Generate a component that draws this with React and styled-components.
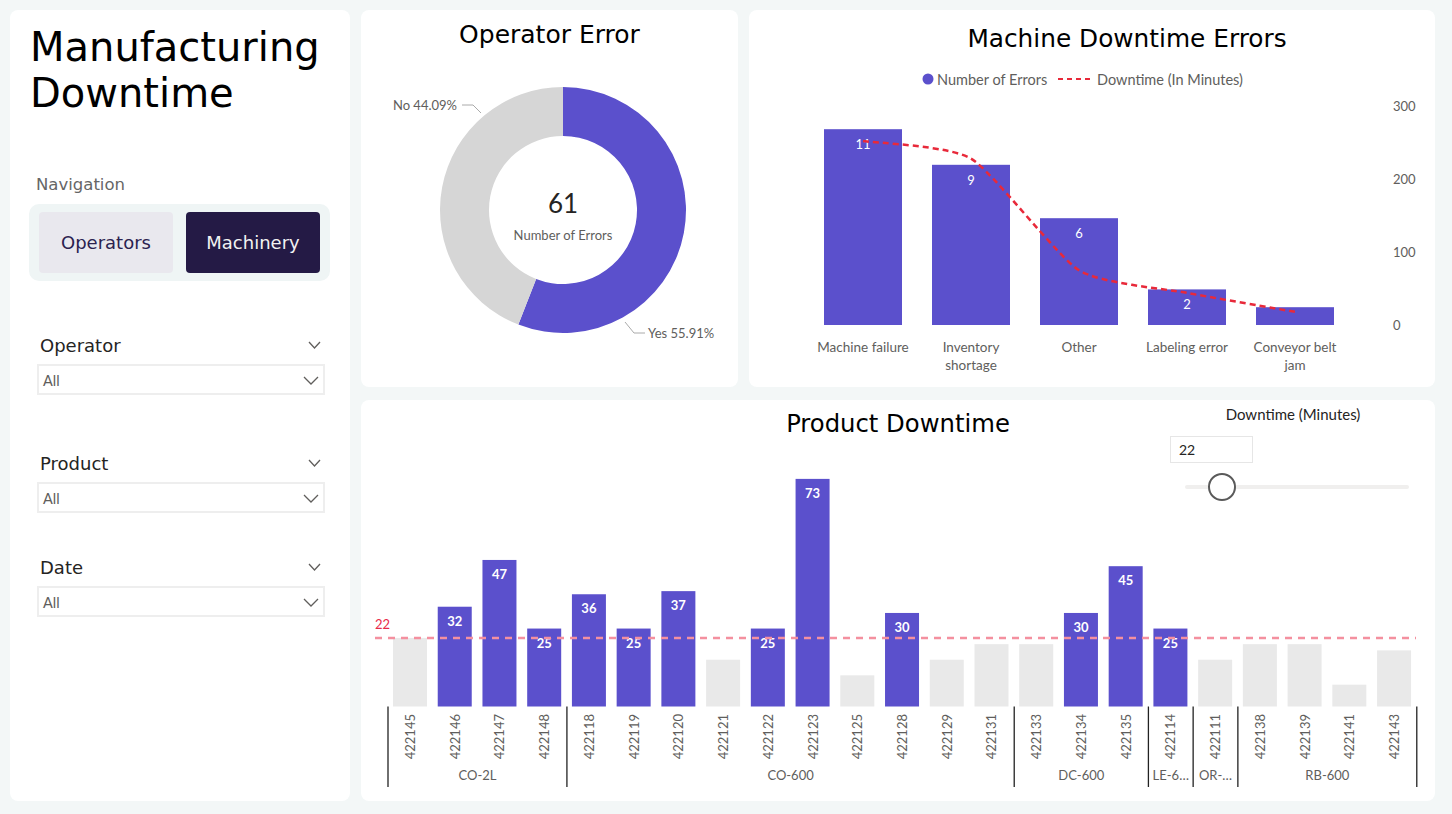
import styled, { createGlobalStyle } from "styled-components";

const GlobalStyle = createGlobalStyle`
  html, body {
    margin: 0;
    padding: 0;
    background: #f3f7f7;
  }
  body {
    font-family: "DejaVu Sans", sans-serif;
  }
`;

const PURPLE = "#5b50cc";
const GREY_BAR = "#e9e9e9";
const LABEL = "#605e5c";

const Page = styled.div`
  width: 1452px;
  height: 814px;
  box-sizing: border-box;
  padding: 10px 17px 14px 10px;
  display: grid;
  grid-template-columns: 340px 1fr;
  gap: 11px;
`;

const Card = styled.div`
  background: #fff;
  border-radius: 8px;
  position: relative;
  overflow: hidden;
`;

const Sidebar = styled(Card)`
  padding: 14px 0 0 20px;
  box-sizing: border-box;
`;

const MainTitle = styled.h1`
  margin: 0;
  font-weight: 400;
  font-size: 40px;
  line-height: 46px;
  color: #000;
`;

const NavLabel = styled.div`
  margin: 59px 0 0 6px;
  font-size: 16.5px;
  line-height: 20px;
  color: #666;
`;

const NavBox = styled.div`
  margin: 9px 0 0 -1px;
  width: 301px;
  box-sizing: border-box;
  padding: 8px 10px;
  background: #eff5f5;
  border-radius: 10px;
  display: flex;
  gap: 13px;
`;

const NavButton = styled.div`
  width: 134px;
  height: 61px;
  border-radius: 4px;
  display: flex;
  align-items: center;
  justify-content: center;
  font-size: 18px;
  background: ${(p) => (p.$active ? "#241a45" : "#e9e8ee")};
  color: ${(p) => (p.$active ? "#f2f2f2" : "#2b2250")};
`;

const Filter = styled.div`
  margin: ${(p) => p.$top}px 0 0 7px;
  width: 288px;
`;

const FilterHead = styled.div`
  height: 22px;
  padding: 0 4px 0 3px;
  display: flex;
  align-items: center;
  justify-content: space-between;
  font-size: 18px;
  color: #252423;
`;

const FilterBox = styled.div`
  margin-top: 8px;
  height: 31px;
  box-sizing: border-box;
  border: 2px solid #eeeeee;
  padding: 2px 4px 0 4px;
  display: flex;
  align-items: center;
  justify-content: space-between;
  font-family: Lato, sans-serif;
  font-size: 14.5px;
  color: ${LABEL};
`;

const Chevron = ({ w, h }) => (
  <svg width={w} height={h} viewBox={`0 0 ${w} ${h}`}>
    <polyline
      points={`1,1 ${w / 2},${h - 1} ${w - 1},1`}
      fill="none"
      stroke="#605e5c"
      strokeWidth="1.3"
    />
  </svg>
);

const Right = styled.div`
  display: grid;
  grid-template-rows: 377px 1fr;
  gap: 13px;
`;

const TopRow = styled.div`
  display: grid;
  grid-template-columns: 377px 1fr;
  gap: 11px;
`;

const ChartTitle = styled.h2`
  margin: 0;
  padding: ${(p) => p.$top}px 0 0 ${(p) => p.$shift || 0}px;
  height: ${(p) => 40 - p.$top}px;
  font-weight: 400;
  font-size: ${(p) => p.$size}px;
  line-height: 30px;
  text-align: center;
  color: #000;
`;

const Chart = styled.svg`
  display: block;
  font-family: Lato, sans-serif;
`;

/* ---------- donut ---------- */

const arc = (cx, cy, R, r, a0, a1) => {
  const pt = (rad, a) => [cx + rad * Math.sin(a), cy - rad * Math.cos(a)];
  const large = a1 - a0 > Math.PI ? 1 : 0;
  const [x0, y0] = pt(R, a0);
  const [x1, y1] = pt(R, a1);
  const [x2, y2] = pt(r, a1);
  const [x3, y3] = pt(r, a0);
  return `M${x0} ${y0} A${R} ${R} 0 ${large} 1 ${x1} ${y1} L${x2} ${y2} A${r} ${r} 0 ${large} 0 ${x3} ${y3} Z`;
};

const OperatorError = () => {
  const split = 0.5591 * Math.PI * 2;
  return (
    <Card>
      <ChartTitle $top={10} $size={25}>
        Operator Error
      </ChartTitle>
      <Chart width="377" height="337">
        <path d={arc(202, 160, 123, 74, 0, split)} fill={PURPLE} />
        <path d={arc(202, 160, 123, 74, split, Math.PI * 2)} fill="#d6d6d6" />
        <text x="202" y="153" fontSize="26" fill="#252423" textAnchor="middle" dominantBaseline="central">
          61
        </text>
        <text x="202" y="185" fontSize="13" fill={LABEL} textAnchor="middle" dominantBaseline="central">
          Number of Errors
        </text>
        <polyline points="101,55 112,55 120,63" fill="none" stroke="#aaa" strokeWidth="1" />
        <text x="96" y="55" fontSize="13" fill={LABEL} textAnchor="end" dominantBaseline="central">
          No 44.09%
        </text>
        <polyline points="264,272 273,283 284,283" fill="none" stroke="#aaa" strokeWidth="1" />
        <text x="287" y="283" fontSize="13" fill={LABEL} dominantBaseline="central">
          Yes 55.91%
        </text>
      </Chart>
    </Card>
  );
};

/* ---------- machine downtime ---------- */

const machines = [
  { name: ["Machine failure"], errors: 11, minutes: 252 },
  { name: ["Inventory", "shortage"], errors: 9, minutes: 228 },
  { name: ["Other"], errors: 6, minutes: 75 },
  { name: ["Labeling error"], errors: 2, minutes: 44 },
  { name: ["Conveyor belt", "jam"], errors: 1, minutes: 18 },
];

// light smoothing between points, close to a polyline like the source chart
const smooth = (pts, k = 0.1) => {
  let d = `M${pts[0][0]} ${pts[0][1]}`;
  for (let i = 0; i < pts.length - 1; i++) {
    const p0 = pts[Math.max(i - 1, 0)];
    const p1 = pts[i];
    const p2 = pts[i + 1];
    const p3 = pts[Math.min(i + 2, pts.length - 1)];
    const c1 = [p1[0] + (p2[0] - p0[0]) * k, p1[1] + (p2[1] - p0[1]) * k];
    const c2 = [p2[0] - (p3[0] - p1[0]) * k, p2[1] - (p3[1] - p1[1]) * k];
    d += ` C${c1[0]} ${c1[1]} ${c2[0]} ${c2[1]} ${p2[0]} ${p2[1]}`;
  }
  return d;
};

const MachineDowntime = () => {
  const base = 275;
  const perErr = 17.8;
  const perMin = 0.73;
  const pts = machines.map((m, i) => [114 + i * 108, base - m.minutes * perMin]);
  return (
    <Card>
      <ChartTitle $top={14} $size={24.8} $shift={70}>
        Machine Downtime Errors
      </ChartTitle>
      <Chart width="686" height="337">
        <circle cx="179" cy="29" r="5.5" fill={PURPLE} />
        <text x="188" y="29" fontSize="14.5" fill={LABEL} dominantBaseline="central">
          Number of Errors
        </text>
        <line x1="309" y1="29" x2="343" y2="29" stroke="#e8293a" strokeWidth="2.2" strokeDasharray="5 4" />
        <text x="348" y="29" fontSize="14.5" fill={LABEL} dominantBaseline="central">
          Downtime (In Minutes)
        </text>
        {[300, 200, 100, 0].map((v, i) => (
          <text key={v} x="644" y={56 + i * 73} fontSize="13" fill={LABEL} dominantBaseline="central">
            {v}
          </text>
        ))}
        {machines.map((m, i) => {
          const h = m.errors * perErr;
          const x = 75 + i * 108;
          return (
            <g key={i}>
              <rect x={x} y={base - h} width="78" height={h} fill={PURPLE} />
              {m.errors > 1 && (
                <text x={x + 39} y={base - h + 15} fontSize="13" fill="#fff" textAnchor="middle" dominantBaseline="central">
                  {m.errors}
                </text>
              )}
              {m.name.map((line, j) => (
                <text key={j} x={x + 39} y={297 + j * 18} fontSize="13.5" fill={LABEL} textAnchor="middle" dominantBaseline="central">
                  {line}
                </text>
              ))}
            </g>
          );
        })}
        <path d={smooth(pts)} fill="none" stroke="#e8293a" strokeWidth="2.5" strokeDasharray="6 4" />
      </Chart>
    </Card>
  );
};

/* ---------- product downtime ---------- */

const products = [
  ["422145", 22], ["422146", 32], ["422147", 47], ["422148", 25],
  ["422118", 36], ["422119", 25], ["422120", 37], ["422121", 15], ["422122", 25],
  ["422123", 73], ["422125", 10], ["422128", 30], ["422129", 15], ["422131", 20],
  ["422133", 20], ["422134", 30], ["422135", 45],
  ["422114", 25], ["422111", 15],
  ["422138", 20], ["422139", 20], ["422141", 7], ["422143", 18],
];

const groups = [
  ["CO-2L", 0, 4],
  ["CO-600", 4, 14],
  ["DC-600", 14, 17],
  ["LE-6…", 17, 18],
  ["OR-…", 18, 19],
  ["RB-600", 19, 23],
];

const Slicer = styled.div`
  position: absolute;
  top: 5px;
  right: 19px;
  width: 246px;
  font-family: Lato, sans-serif;
`;

const SlicerLabel = styled.div`
  text-align: center;
  font-size: 15px;
  line-height: 18px;
  color: #252423;
`;

const ValueBox = styled.div`
  margin-top: 13px;
  width: 83px;
  height: 27px;
  box-sizing: border-box;
  border: 1px solid #e6e6e6;
  padding-left: 8px;
  display: flex;
  align-items: center;
  font-size: 14px;
  color: #252423;
`;

const Track = styled.div`
  margin: 10px 7px 0 15px;
  height: 28px;
  position: relative;
  &::before {
    content: "";
    position: absolute;
    left: 0;
    right: 0;
    top: 12px;
    height: 4px;
    border-radius: 2px;
    background: #f0efee;
  }
`;

const Thumb = styled.div`
  position: absolute;
  top: 0;
  left: 23px;
  width: 28px;
  height: 28px;
  box-sizing: border-box;
  border: 2px solid #5a5a5a;
  border-radius: 50%;
  background: #fff;
`;

const ProductDowntime = () => {
  const base = 266.5;
  const scale = 3.118;
  const pitch = 44.73;
  const x0 = 27;
  const threshold = 22;
  const refY = base - threshold * scale;
  const seps = [0, 4, 14, 17, 18, 19, 23];
  return (
    <Card>
      <ChartTitle $top={9} $size={24.3}>
        Product Downtime
      </ChartTitle>
      <Chart width="1074" height="361">
        {products.map(([id, v], i) => {
          const h = v * scale;
          const x = x0 + 5 + i * pitch;
          const on = v > threshold;
          return (
            <g key={id}>
              <rect x={x} y={base - h} width="34" height={h} fill={on ? PURPLE : GREY_BAR} />
              {on && (
                <text x={x + 17} y={base - h + 14} fontSize="13" fontWeight="700" fill="#fff" textAnchor="middle" dominantBaseline="central">
                  {v}
                </text>
              )}
              <text
                x={x + 17}
                y={274}
                fontSize="13"
                fill={LABEL}
                textAnchor="end"
                dominantBaseline="central"
                transform={`rotate(-90 ${x + 17} 274)`}
              >
                {id}
              </text>
            </g>
          );
        })}
        <line x1="14" y1={refY} x2="1055" y2={refY} stroke="#f4909f" strokeWidth="2.5" strokeDasharray="7 6" />
        <text x="14" y="184" fontSize="13" fill="#e8294a" dominantBaseline="central">
          22
        </text>
        {seps.map((k) => (
          <line key={k} x1={x0 + k * pitch} y1={base} x2={x0 + k * pitch} y2="347" stroke="#222" strokeWidth="1.3" />
        ))}
        {groups.map(([name, a, b]) => (
          <text key={name} x={x0 + ((a + b) / 2) * pitch} y="335" fontSize="13" fill={LABEL} textAnchor="middle" dominantBaseline="central">
            {name}
          </text>
        ))}
      </Chart>
      <Slicer>
        <SlicerLabel>Downtime (Minutes)</SlicerLabel>
        <ValueBox>22</ValueBox>
        <Track>
          <Thumb />
        </Track>
      </Slicer>
    </Card>
  );
};

/* ---------- sidebar ---------- */

const filters = [
  { label: "Operator", top: 53 },
  { label: "Product", top: 57 },
  { label: "Date", top: 43 },
];

const App = () => (
  <>
    <GlobalStyle />
    <Page>
      <Sidebar>
        <MainTitle>
          Manufacturing
          <br />
          Downtime
        </MainTitle>
        <NavLabel>Navigation</NavLabel>
        <NavBox>
          <NavButton>Operators</NavButton>
          <NavButton $active>Machinery</NavButton>
        </NavBox>
        {filters.map((f) => (
          <Filter key={f.label} $top={f.top}>
            <FilterHead>
              {f.label}
              <Chevron w={13} h={8} />
            </FilterHead>
            <FilterBox>
              All
              <Chevron w={16} h={9} />
            </FilterBox>
          </Filter>
        ))}
      </Sidebar>
      <Right>
        <TopRow>
          <OperatorError />
          <MachineDowntime />
        </TopRow>
        <ProductDowntime />
      </Right>
    </Page>
  </>
);

export default App;
